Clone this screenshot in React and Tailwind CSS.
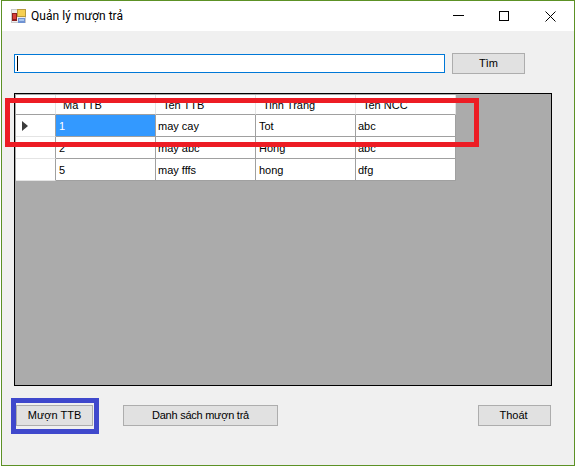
import React from 'react'

const rows = [
  { id: '1', name: 'may cay', status: 'Tot', ncc: 'abc', current: true },
  { id: '2', name: 'may abc', status: 'Hong', ncc: 'abc' },
  { id: '5', name: 'may fffs', status: 'hong', ncc: 'dfg' },
]

const headers = ['Ma TTB', 'Ten TTB', 'Tinh Trang', 'Ten NCC']

const AppIcon = () => (
  <svg width="16" height="16" viewBox="0 0 16 16" className="shrink-0">
    <rect x="0" y="1" width="15" height="14" fill="#c9c9c9" />
    <rect x="1" y="2" width="13" height="12" fill="#ededed" />
    <rect x="6" y="1" width="9" height="8" fill="#b89a3c" />
    <rect x="7" y="2" width="7" height="6" fill="#f6cf52" />
    <rect x="1" y="5" width="5" height="8" fill="#8d1f1f" />
    <rect x="2" y="6" width="3" height="5" fill="#d8403a" />
    <rect x="7" y="10" width="7" height="5" fill="#6f92d2" />
    <rect x="8" y="11" width="5" height="2" fill="#a9c6ee" />
  </svg>
)

const Button = ({ label, className }) => (
  <button className={`h-[21px] border border-[#adadad] bg-[#e1e1e1] text-[11px] leading-none text-black ${className}`}>
    {label}
  </button>
)

const Cell = ({ children, selected, className = 'pl-[3px]' }) => (
  <div
    className={`w-[100px] h-[22px] pt-px flex items-center border-r border-b border-[#a0a0a0] ${className} ${
      selected ? 'bg-[#3399ff] text-white' : 'bg-white text-black'
    }`}
  >
    {children}
  </div>
)

export default function App() {
  return (
    <div className="w-[575px] h-[467px] bg-white pl-px font-['Liberation_Sans',sans-serif]">
      <div className="relative w-[574px] h-[466px] flex flex-col bg-[#f0f0f0] border border-[#5c9125]">
        {/* title bar */}
        <div className="h-[30px] bg-white flex items-center">
          <div className="pl-[9px] flex items-center gap-[4px] flex-1">
            <AppIcon />
            <span className="font-['Roboto',sans-serif] text-[12px] tracking-[0.05px] text-black">Quản lý mượn trả</span>
          </div>
          <svg width="11" height="2" viewBox="0 0 11 2" className="mr-[35px]">
            <rect width="11" height="1" fill="#000" />
          </svg>
          <svg width="10" height="10" viewBox="0 0 10 10" className="mr-[36px]">
            <rect x="0.5" y="0.5" width="9" height="9" fill="none" stroke="#000" />
          </svg>
          <svg width="11" height="11" viewBox="0 0 11 11" className="mr-[18px]">
            <path d="M0.5 0.5L10.5 10.5M10.5 0.5L0.5 10.5" stroke="#000" fill="none" />
          </svg>
        </div>

        {/* search */}
        <div className="mt-[22px] ml-[12px] flex items-center gap-[7px] h-[21px]">
          <div className="w-[431px] h-[19px] bg-white border border-[#0078d7] flex items-center pl-[2px]">
            <div className="w-px h-[15px] bg-black" />
          </div>
          <Button label="Tìm" className="w-[73px]" />
        </div>

        {/* data grid */}
        <div className="mt-[19px] ml-[12px] w-[538px] h-[293px] pt-px pl-px bg-[#ababab] border border-black text-[11px]">
          <div className="flex h-[20px]">
            <div className="w-[40px] bg-white border-r border-b border-r-[#e4e4e4] border-b-[#a0a0a0]" />
            {headers.map((h) => (
              <div key={h} className="w-[100px] bg-white border-r border-b border-r-[#e4e4e4] border-b-[#a0a0a0] pl-[7px] pt-[2px] flex items-center">
                {h}
              </div>
            ))}
          </div>
          {rows.map((r) => (
            <div key={r.id} className="flex h-[22px]">
              <div className="w-[40px] bg-white border-r border-b border-r-[#a0a0a0] border-b-[#e4e4e4] flex items-center pl-[6px]">
                {r.current && (
                  <svg width="6" height="10" viewBox="0 0 6 10">
                    <path d="M0 0L6 5L0 10Z" fill="#3c3c3c" />
                  </svg>
                )}
              </div>
              <Cell selected={r.current}>{r.id}</Cell>
              <Cell className="pl-[2px]">{r.name}</Cell>
              <Cell>{r.status}</Cell>
              <Cell className="pl-[2px]">{r.ncc}</Cell>
            </div>
          ))}
        </div>

        {/* bottom buttons */}
        <div className="mt-[19px] ml-[14px] flex items-center">
          <Button label="Mượn TTB" className="w-[77px]" />
          <Button label="Danh sách mượn trả" className="w-[155px] ml-[30px] tracking-[-0.25px]" />
          <Button label="Thoát" className="w-[73px] ml-[200px] pr-[2px]" />
        </div>

        {/* annotations drawn over the screenshot */}
        <div className="absolute left-[3px] top-[97px] w-[474px] h-[49px] border-[5px] border-[#ed1c24]" />
        <div className="absolute left-[9px] top-[397px] w-[88px] h-[36px] border-[5px] border-[#3f48cc]" />
      </div>
    </div>
  )
}
